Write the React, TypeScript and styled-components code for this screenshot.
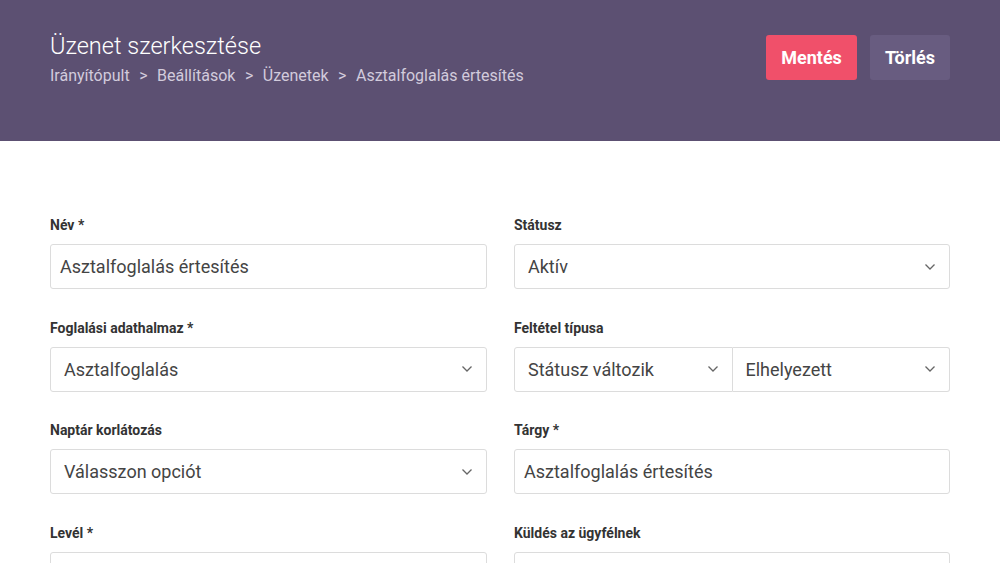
import React from "react";
import styled, { createGlobalStyle } from "styled-components";

const GlobalStyle = createGlobalStyle`
  body {
    margin: 0;
    font-family: Roboto, "Liberation Sans", sans-serif;
    background: #ffffff;
  }
`;

const Chevron = () => (
  <svg width="12" height="8" viewBox="0 0 12 8" fill="none">
    <path d="M1.5 1.5 L6 6 L10.5 1.5" stroke="#666" strokeWidth="1.3" />
  </svg>
);

const App = () => {
  return (
    <Page>
      <GlobalStyle />
      <Header>
        <TitleBlock>
          <Title>Üzenet szerkesztése</Title>
          <Crumbs>
            <span>Irányítópult</span>
            <Sep>&gt;</Sep>
            <span>Beállítások</span>
            <Sep>&gt;</Sep>
            <span>Üzenetek</span>
            <Sep>&gt;</Sep>
            <span>Asztalfoglalás értesítés</span>
          </Crumbs>
        </TitleBlock>
        <Actions>
          <Button variant="save">Mentés</Button>
          <Button variant="delete">Törlés</Button>
        </Actions>
      </Header>

      <Form>
        <Field>
          <Label>Név *</Label>
          <TextBox>Asztalfoglalás értesítés</TextBox>
        </Field>
        <Field>
          <Label>Státusz</Label>
          <Select>
            <span>Aktív</span>
            <Chevron />
          </Select>
        </Field>

        <Field>
          <Label>Foglalási adathalmaz *</Label>
          <Select>
            <span>Asztalfoglalás</span>
            <Chevron />
          </Select>
        </Field>
        <Field>
          <Label>Feltétel típusa</Label>
          <SplitGroup>
            <Select $part="left">
              <span>Státusz változik</span>
              <Chevron />
            </Select>
            <Select $part="right">
              <span>Elhelyezett</span>
              <Chevron />
            </Select>
          </SplitGroup>
        </Field>

        <Field>
          <Label>Naptár korlátozás</Label>
          <Select>
            <span>Válasszon opciót</span>
            <Chevron />
          </Select>
        </Field>
        <Field>
          <Label>Tárgy *</Label>
          <TextBox>Asztalfoglalás értesítés</TextBox>
        </Field>

        <Field>
          <Label>Levél *</Label>
          <TextBox />
        </Field>
        <Field>
          <Label>Küldés az ügyfélnek</Label>
          <TextBox />
        </Field>
      </Form>
    </Page>
  );
};

export default App;

const Page = styled.div`
  width: 1000px;
  height: 563px;
  overflow: hidden;
`;

const Header = styled.div`
  height: 141px;
  background: #5c5072;
  padding: 0 50px;
  box-sizing: border-box;
  display: flex;
  justify-content: space-between;
  align-items: flex-start;
`;

const TitleBlock = styled.div`
  padding-top: 32px;
`;

const Title = styled.div`
  font-size: 23.5px;
  font-weight: 300;
  color: #ffffff;
  line-height: 29px;
`;

const Crumbs = styled.div`
  margin-top: 5px;
  font-size: 16px;
  color: #d2cbdc;
  display: flex;
  gap: 8.5px;
`;

const Sep = styled.span`
  margin: 0 1px;
`;

const Actions = styled.div`
  padding-top: 35px;
  display: flex;
  gap: 13px;
`;

const Button = styled.button<{ variant: "save" | "delete" }>`
  height: 45px;
  padding: 0 15px;
  border: none;
  border-radius: 3px;
  font-family: Roboto, "Liberation Sans", sans-serif;
  font-size: 18px;
  font-weight: 700;
  color: #ffffff;
  background: ${(p) => (p.variant === "save" ? "#f0506a" : "#685c80")};
`;

const Form = styled.div`
  padding: 75px 50px 0;
  display: grid;
  grid-template-columns: 437px 436px;
  column-gap: 27px;
  row-gap: 29.6px;
`;

const Field = styled.div`
  display: flex;
  flex-direction: column;
`;

const Label = styled.div`
  font-size: 14px;
  font-weight: 700;
  color: #333333;
  height: 18px;
  line-height: 18px;
  margin-bottom: 10px;
`;

const TextBox = styled.div`
  height: 45px;
  box-sizing: border-box;
  border: 1px solid #dcdcdc;
  border-radius: 3px;
  padding: 0 9px;
  display: flex;
  align-items: center;
  font-size: 18px;
  color: #444444;
`;

const SplitGroup = styled.div`
  display: flex;
`;

const Select = styled.div<{ $part?: "left" | "right" }>`
  flex: 1;
  height: 45px;
  box-sizing: border-box;
  border: 1px solid #dcdcdc;
  border-radius: ${(p) =>
    p.$part === "left" ? "3px 0 0 3px" : p.$part === "right" ? "0 3px 3px 0" : "3px"};
  ${(p) => (p.$part === "right" ? "border-left: none;" : "")}
  padding: 0 13px 0 13px;
  display: flex;
  align-items: center;
  justify-content: space-between;
  font-size: 18px;
  color: #444444;
`;
